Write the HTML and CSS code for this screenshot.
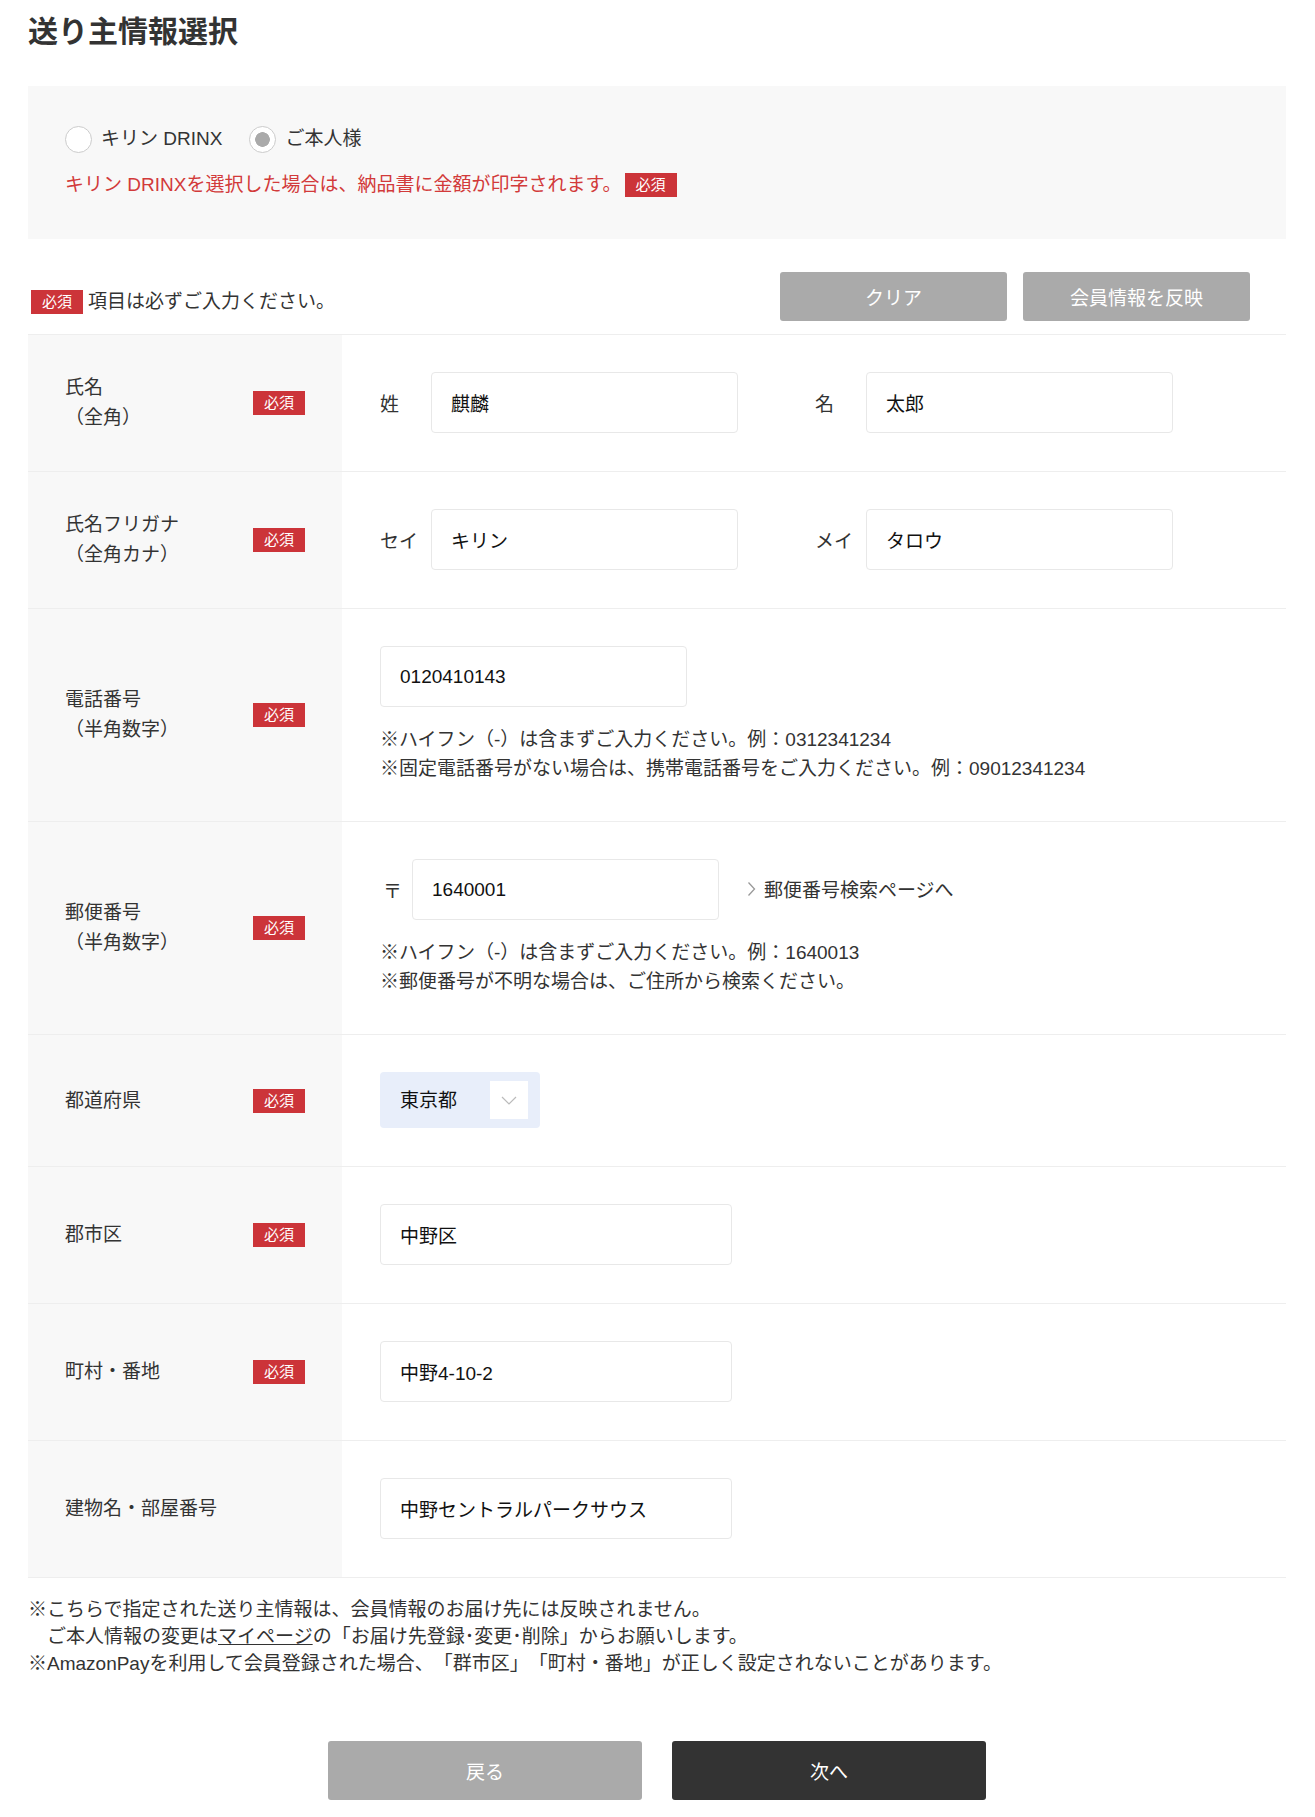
FILE: index.html
```html
<!DOCTYPE html>
<html lang="ja">
<head>
    <meta charset="UTF-8">
    <meta name="viewport" content="width=device-width, initial-scale=1.0">
    <title>送り主情報選択</title>
    <link rel="stylesheet" href="styles.css">
</head>
<body>
    <div class="page">
        <h1 class="title">送り主情報選択</h1>

        <section class="sender-box">
            <div class="radio-row">
                <label class="radio"><input type="radio" name="sender">キリン DRINX</label>
                <label class="radio"><input type="radio" name="sender" checked>ご本人様</label>
            </div>
            <p class="sender-note">キリン DRINXを選択した場合は、納品書に金額が印字されます。<span class="req">必須</span></p>
        </section>

        <div class="form-head">
            <p class="req-note"><span class="req">必須</span>項目は必ずご入力ください。</p>
            <div class="head-buttons">
                <button class="btn-sub" type="button">クリア</button>
                <button class="btn-sub" type="button">会員情報を反映</button>
            </div>
        </div>

        <div class="form-table">
            <div class="form-row">
                <div class="form-label"><span>氏名<br>（全角）</span><span class="req">必須</span></div>
                <div class="form-field">
                    <div class="pair-group">
                        <div class="pair"><span class="pair-label">姓</span><input class="text-input w-name" type="text" value="麒麟"></div>
                        <div class="pair"><span class="pair-label">名</span><input class="text-input w-name" type="text" value="太郎"></div>
                    </div>
                </div>
            </div>

            <div class="form-row">
                <div class="form-label"><span>氏名フリガナ<br>（全角カナ）</span><span class="req">必須</span></div>
                <div class="form-field">
                    <div class="pair-group">
                        <div class="pair"><span class="pair-label">セイ</span><input class="text-input w-name" type="text" value="キリン"></div>
                        <div class="pair"><span class="pair-label">メイ</span><input class="text-input w-name" type="text" value="タロウ"></div>
                    </div>
                </div>
            </div>

            <div class="form-row">
                <div class="form-label"><span>電話番号<br>（半角数字）</span><span class="req">必須</span></div>
                <div class="form-field">
                    <input class="text-input w-name" type="text" value="0120410143">
                    <p class="field-notes">※ハイフン（-）は含まずご入力ください。例：0312341234<br>※固定電話番号がない場合は、携帯電話番号をご入力ください。例：09012341234</p>
                </div>
            </div>

            <div class="form-row">
                <div class="form-label"><span>郵便番号<br>（半角数字）</span><span class="req">必須</span></div>
                <div class="form-field">
                    <div class="zip-line">
                        <span class="zip-mark">〒</span>
                        <input class="text-input w-name" type="text" value="1640001">
                        <a class="zip-link" href="#">
                            <svg width="9" height="16" viewBox="0 0 9 16"><polyline points="1.5,1.5 7.5,8 1.5,14.5" fill="none" stroke="#999" stroke-width="1.3"/></svg>
                            郵便番号検索ページへ
                        </a>
                    </div>
                    <p class="field-notes">※ハイフン（-）は含まずご入力ください。例：1640013<br>※郵便番号が不明な場合は、ご住所から検索ください。</p>
                </div>
            </div>

            <div class="form-row">
                <div class="form-label"><span>都道府県</span><span class="req">必須</span></div>
                <div class="form-field">
                    <div class="select-wrap">
                        <select class="pref-select">
                            <option>東京都</option>
                        </select>
                        <span class="select-arrow">
                            <svg width="16" height="9" viewBox="0 0 16 9"><polyline points="1,1 8,8 15,1" fill="none" stroke="#bbb" stroke-width="1.2"/></svg>
                        </span>
                    </div>
                </div>
            </div>

            <div class="form-row">
                <div class="form-label"><span>郡市区</span><span class="req">必須</span></div>
                <div class="form-field">
                    <input class="text-input w-addr" type="text" value="中野区">
                </div>
            </div>

            <div class="form-row">
                <div class="form-label"><span>町村・番地</span><span class="req">必須</span></div>
                <div class="form-field">
                    <input class="text-input w-addr" type="text" value="中野4-10-2">
                </div>
            </div>

            <div class="form-row">
                <div class="form-label"><span>建物名・部屋番号</span></div>
                <div class="form-field">
                    <input class="text-input w-addr" type="text" value="中野セントラルパークサウス">
                </div>
            </div>
        </div>

        <p class="foot-notes">※こちらで指定された送り主情報は、会員情報のお届け先には反映されません。<br>　ご本人情報の変更は<a href="#">マイページ</a>の「お届け先登録･変更･削除」からお願いします。<br>※AmazonPayを利用して会員登録された場合、「群市区」「町村・番地」が正しく設定されないことがあります。</p>

        <div class="foot-buttons">
            <button class="btn btn-back" type="button">戻る</button>
            <button class="btn btn-next" type="button">次へ</button>
        </div>
    </div>
</body>
</html>
```

FILE: styles.css
```css
body {
    margin: 0;
    font-family: "Liberation Sans", "Noto Sans CJK JP", sans-serif;
    font-size: 19px;
    color: #333;
    background-color: #fff;
    text-spacing-trim: space-all;
}

.page {
    padding: 0 29px 0 28px;
}

.title {
    margin: 12px 0 34px;
    font-size: 30px;
    line-height: 40px;
    font-weight: bold;
    color: #333;
}

/* sender choice */
.sender-box {
    background-color: #f8f8f8;
    padding: 39px 37px 40px;
}

.radio-row {
    display: flex;
    align-items: center;
    gap: 27px;
    height: 28px;
}

.radio {
    display: flex;
    align-items: center;
    gap: 9px;
    line-height: 28px;
}

.radio input {
    appearance: none;
    -webkit-appearance: none;
    margin: 0;
    width: 27px;
    height: 27px;
    border: 1px solid #ccc;
    border-radius: 50%;
    background-color: #fff;
}

.radio input:checked {
    background: radial-gradient(circle, #aaa 0 7px, #fff 7.6px);
}

.sender-note {
    display: flex;
    align-items: center;
    margin: 18px 0 0;
    line-height: 28px;
    color: #d23a3a;
}

.sender-note .req {
    margin-left: 3px;
}

.req {
    display: inline-block;
    width: 52px;
    height: 24px;
    line-height: 24px;
    font-size: 15px;
    text-align: center;
    color: #fff;
    background-color: #cc3439;
    flex-shrink: 0;
}

/* form head */
.form-head {
    display: flex;
    justify-content: space-between;
    align-items: center;
    margin: 33px 0 13px;
    padding: 0 36px 0 3px;
}

.req-note {
    display: flex;
    align-items: center;
    gap: 5px;
    margin: 10px 0 0;
    line-height: 24px;
}

.head-buttons {
    display: flex;
    gap: 16px;
}

.btn-sub {
    width: 227px;
    height: 49px;
    border: none;
    border-radius: 3px;
    background-color: #aaa;
    color: #fff;
    font-family: inherit;
    font-size: 19px;
}

/* form table */
.form-table {
    border-top: 1px solid #eee;
}

.form-row {
    display: flex;
    border-bottom: 1px solid #eee;
}

.form-label {
    box-sizing: border-box;
    width: 314px;
    flex-shrink: 0;
    display: flex;
    justify-content: space-between;
    align-items: center;
    padding: 0 37px;
    background-color: #f8f8f8;
    line-height: 30px;
}

.form-field {
    flex: 1;
    padding: 37px 38px 38px;
}

.pair-group {
    display: flex;
    gap: 77px;
}

.pair {
    display: flex;
    align-items: center;
}

.pair-label {
    width: 51px;
}

.text-input {
    box-sizing: border-box;
    display: block;
    height: 61px;
    margin: 0;
    padding: 0 19px;
    border: 1px solid #e8e8e8;
    border-radius: 4px;
    background-color: #fff;
    font-family: inherit;
    font-size: 19px;
    color: #111;
}

.w-name {
    width: 307px;
}

.w-addr {
    width: 352px;
}

.field-notes {
    margin: 18px 0 0;
    line-height: 29px;
}

.zip-line {
    display: flex;
    align-items: center;
}

.zip-mark {
    width: 32px;
    padding-left: 3px;
    box-sizing: border-box;
}

.zip-link {
    display: flex;
    align-items: center;
    gap: 8px;
    margin: -2px 0 0 28px;
    color: #333;
    text-decoration: none;
}

.select-wrap {
    position: relative;
    width: 160px;
    height: 56px;
    border-radius: 4px;
    background-color: #e8eefa;
}

.pref-select {
    appearance: none;
    -webkit-appearance: none;
    width: 100%;
    height: 100%;
    margin: 0;
    padding: 0 0 0 20px;
    border: none;
    background: transparent;
    font-family: inherit;
    font-size: 19px;
    color: #111;
}

.select-arrow {
    position: absolute;
    top: 9px;
    right: 12px;
    width: 38px;
    height: 38px;
    display: flex;
    justify-content: center;
    align-items: center;
    background-color: #fff;
    pointer-events: none;
}

/* footer */
.foot-notes {
    margin: 18px 0 0;
    line-height: 27px;
}

.foot-notes a {
    color: #333;
}

.foot-buttons {
    display: flex;
    justify-content: center;
    gap: 30px;
    margin-top: 64px;
}

.btn {
    width: 314px;
    height: 59px;
    border: none;
    border-radius: 3px;
    color: #fff;
    font-family: inherit;
    font-size: 19px;
}

.btn-back {
    background-color: #aaa;
}

.btn-next {
    background-color: #333;
}
```
